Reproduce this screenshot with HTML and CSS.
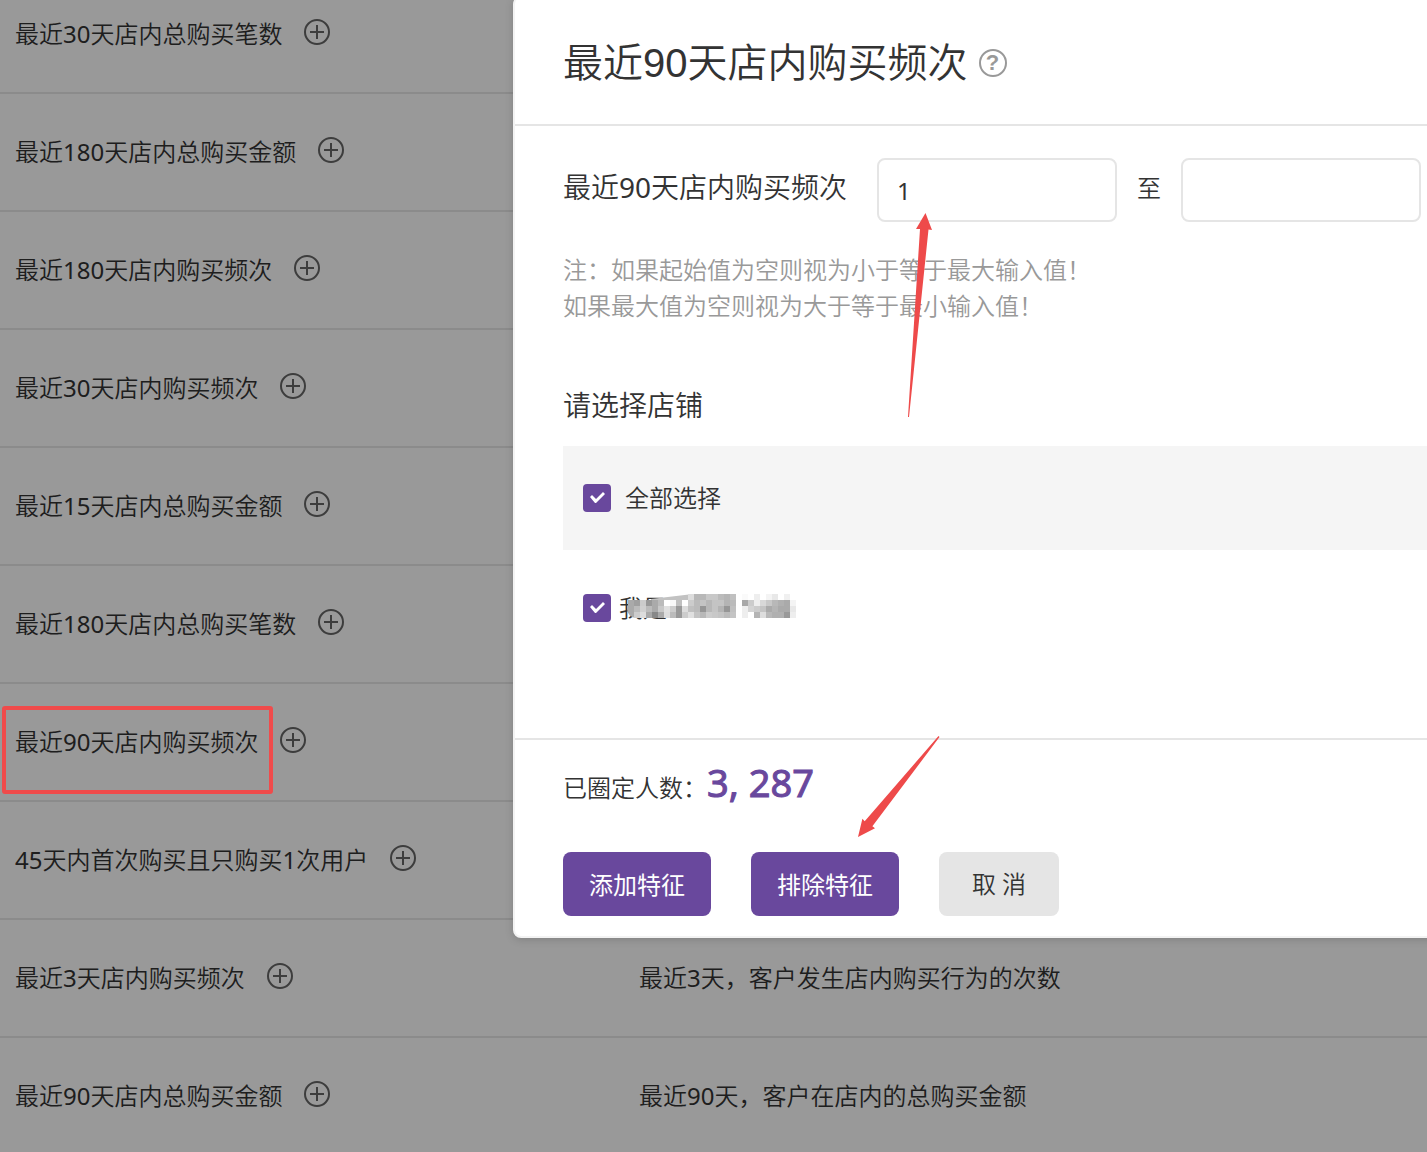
FILE: index.html
```html
<!DOCTYPE html>
<html lang="zh-CN">
<head>
<meta charset="utf-8">
<title>最近90天店内购买频次</title>
<link rel="stylesheet" href="styles.css">
</head>
<body>
<svg class="sprite" aria-hidden="true">
  <symbol id="plus" viewBox="0 0 26 26">
    <circle cx="13" cy="13" r="12" fill="none" stroke="currentColor" stroke-width="2"/>
    <path d="M6 13h14M13 6v14" stroke="currentColor" stroke-width="2"/>
  </symbol>
</svg>
<main class="page">
  <table class="features">
    <colgroup><col class="col-name"><col></colgroup>
    <tbody>
      <tr><td><div class="cell">最近30天店内总购买笔数<button class="add" aria-label="添加"><svg><use href="#plus"/></svg></button></div></td><td></td></tr>
      <tr><td><div class="cell">最近180天店内总购买金额<button class="add" aria-label="添加"><svg><use href="#plus"/></svg></button></div></td><td></td></tr>
      <tr><td><div class="cell">最近180天店内购买频次<button class="add" aria-label="添加"><svg><use href="#plus"/></svg></button></div></td><td></td></tr>
      <tr><td><div class="cell">最近30天店内购买频次<button class="add" aria-label="添加"><svg><use href="#plus"/></svg></button></div></td><td></td></tr>
      <tr><td><div class="cell">最近15天店内总购买金额<button class="add" aria-label="添加"><svg><use href="#plus"/></svg></button></div></td><td></td></tr>
      <tr><td><div class="cell">最近180天店内总购买笔数<button class="add" aria-label="添加"><svg><use href="#plus"/></svg></button></div></td><td></td></tr>
      <tr><td><div class="cell">最近90天店内购买频次<button class="add" aria-label="添加"><svg><use href="#plus"/></svg></button></div></td><td></td></tr>
      <tr><td><div class="cell">45天内首次购买且只购买1次用户<button class="add" aria-label="添加"><svg><use href="#plus"/></svg></button></div></td><td></td></tr>
      <tr><td><div class="cell">最近3天店内购买频次<button class="add" aria-label="添加"><svg><use href="#plus"/></svg></button></div></td><td>最近3天，客户发生店内购买行为的次数</td></tr>
      <tr><td><div class="cell">最近90天店内总购买金额<button class="add" aria-label="添加"><svg><use href="#plus"/></svg></button></div></td><td>最近90天，客户在店内的总购买金额</td></tr>
    </tbody>
  </table>
  <div class="backdrop"></div>

  <section class="dialog" role="dialog" aria-labelledby="dialog-title">
    <header class="dialog-head">
      <h1 id="dialog-title">最近90天店内购买频次</h1>
      <button class="help" aria-label="帮助">?</button>
    </header>
    <div class="dialog-body">
      <div class="range">
        <label class="range-label" for="from">最近90天店内购买频次</label>
        <input class="field" id="from" type="text" value="1">
        <label for="to">至</label>
        <input class="field" id="to" type="text">
      </div>
      <p class="note">注：如果起始值为空则视为小于等于最大输入值！<br>如果最大值为空则视为大于等于最小输入值！</p>
      <h2>请选择店铺</h2>
      <label class="shop shop-all"><input type="checkbox" checked>全部选择</label>
      <label class="shop"><input type="checkbox" checked><span class="shop-name">我是<svg class="mosaic" viewBox="0 0 172 26" aria-hidden="true">
        <path d="M24 5L66 0V8H24Z" fill="#c2c2c2"/>
        <circle cx="9" cy="15" r="9" fill="#aaa"/>
      </svg></span></label>
    </div>
    <footer class="dialog-foot">
      <p class="count">已圈定人数：<strong>3, 287</strong></p>
      <div class="actions">
        <button class="btn primary">添加特征</button>
        <button class="btn primary">排除特征</button>
        <button class="btn cancel">取 消</button>
      </div>
    </footer>
  </section>

  <svg class="marks" aria-hidden="true">
    <rect x="4" y="708" width="267" height="84" rx="1" fill="none" stroke="#f04b4b" stroke-width="4"/>
    <path d="M925.500 213L932 230L928.500 229.500L909 417H908L920 229L916 229Z" fill="#ee4a4a"/>
    <path d="M858 837L862.400 818.700L864.700 821.300L938.500 736L939.500 737L872.400 826.300L875 828.300Z" fill="#ee4a4a"/>
  </svg>
</main>
<script src="mosaic.js"></script>
</body>
</html>
```
FILE: mosaic.js
```js
// Pixelated cover over the private part of the shop name: one grey level per 6px cell.
const rows = [
  ". . . . . . . . . . dd b8 b8 c8 c8 bb b5 c0 ff fa ff ee ff f4 e8 ff f0 ff",
  "aa a0 cc 99 aa bb ff f8 c0 ff cc bb c4 b8 c4 c4 b4 bb ff a8 cc ee d8 c8 b8 b0 aa f4",
  "aa bb d0 bb aa c8 e0 cc 99 dd c0 bb 96 b8 c4 b4 96 c0 ff ee d4 cc c4 aa b4 aa aa e8",
  ". cc dd a8 88 aa dd bb 99 cc e0 c4 b8 cc c8 c4 bb c4 ff ee ff b4 dd b8 b0 b0 99 ee"
];
const cover = document.querySelector(".mosaic");
rows.forEach((row, y) => row.split(" ").forEach((level, x) => {
  if (level === ".") return;
  const cell = document.createElementNS("http://www.w3.org/2000/svg", "rect");
  cell.setAttribute("x", 1 + x * 6);
  cell.setAttribute("y", y * 6);
  cell.setAttribute("width", 6);
  cell.setAttribute("height", 6);
  cell.setAttribute("fill", "#" + level.repeat(3));
  cover.append(cell);
}));
```
FILE: styles.css
```css
* { box-sizing: border-box; }

body {
  margin: 0;
  color: #333;
  font: 400 24px/36px "Noto Sans", "Noto Sans CJK SC DemiLight", "Noto Sans CJK SC", sans-serif;
}

button, input { font: inherit; color: inherit; }
h1, h2, p { margin: 0; font-weight: inherit; }
.sprite { display: none; }

.page {
  position: relative;
  height: 100vh;
  overflow: hidden;
}

/* feature list, scrolled part-way through its first row */
.features {
  width: 100%;
  margin-top: -24px;
  border-spacing: 0;
  table-layout: fixed;
}
.col-name { width: 624px; }
.features td {
  height: 118px;
  padding: 0 15px;
  border-bottom: 2px solid #e8e8e8;
}
.cell { display: flex; align-items: center; gap: 22px; }
.add {
  width: 26px;
  height: 30px;
  padding: 0 0 4px;
  border: 0;
  background: none;
  color: #666;
}
.add svg { display: block; width: 26px; height: 26px; }

.backdrop {
  position: absolute;
  inset: 0;
  background: rgba(0, 0, 0, .4);
}

/* dialog */
.dialog {
  position: absolute;
  top: -4px;
  left: 513px;
  right: -48px;
  border: 2px solid #f3f3f3;
  border-radius: 8px;
  background: #fff;
  box-shadow: 0 2px 8px rgba(0, 0, 0, .15);
}
.dialog-head {
  display: flex;
  align-items: center;
  gap: 11px;
  height: 128px;
  padding: 4px 48px 0;
  border-bottom: 2px solid #e5e5e5;
}
h1 {
  font-family: "Liberation Sans", "Noto Sans CJK SC", sans-serif;
  font-size: 40px;
  font-weight: 350;
  line-height: 56px;
}
.help {
  width: 28px;
  height: 28px;
  padding: 0;
  border: 2px solid #999;
  border-radius: 50%;
  background: none;
  color: #999;
  font-family: "Liberation Sans", sans-serif;
  font-size: 22px;
  font-weight: 700;
  line-height: 24px;
}
.dialog-body { height: 612px; padding: 32px 0 0 48px; }
.range { display: flex; align-items: center; gap: 20px; }
.range label { padding-bottom: 4px; }
.range .range-label { margin-right: 10px; padding-bottom: 6px; font-size: 28px; }
.field {
  width: 240px;
  height: 64px;
  padding: 0 18px;
  border: 2px solid #e5e5e5;
  border-radius: 8px;
  background: #fff;
}
.note { margin-top: 30px; color: #999; }
h2 { margin: 60px 0 20px; font-size: 28px; line-height: 42px; }
.shop {
  display: flex;
  align-items: center;
  gap: 8px;
  height: 116px;
  padding-left: 20px;
}
.shop-all { gap: 14px; height: 104px; background: #f5f5f5; }
.shop input {
  appearance: none;
  width: 28px;
  height: 28px;
  margin: 0;
  border-radius: 4px;
  background: #69489d;
}
.shop input:checked::before {
  content: "";
  display: block;
  width: 28px;
  height: 28px;
  background: #fff;
  clip-path: polygon(7px 13px, 9px 11px, 13px 15px, 20px 8px, 22px 10px, 13px 19px, 12px 19px);
}
.shop-name { position: relative; }
.mosaic {
  position: absolute;
  top: 4px;
  left: 8px;
  width: 172px;
  height: 26px;
}

.dialog-foot { padding: 24px 48px 20px; border-top: 2px solid #e5e5e5; }
.count { display: flex; align-items: baseline; height: 48px; }
.count strong {
  color: #69489d;
  font-size: 38px;
  font-weight: 400;
  -webkit-text-stroke: 1px currentColor;
}
.actions { display: flex; gap: 40px; margin-top: 40px; }
.btn { width: 148px; height: 64px; padding: 0; border: 0; border-radius: 8px; }
.primary {
  background: #69489d;
  color: #fff;
  font-family: "Noto Sans CJK SC", sans-serif;
}
.cancel { width: 120px; background: #e5e5e5; }

.marks {
  position: absolute;
  inset: 0;
  width: 100%;
  height: 100%;
  pointer-events: none;
}
```
